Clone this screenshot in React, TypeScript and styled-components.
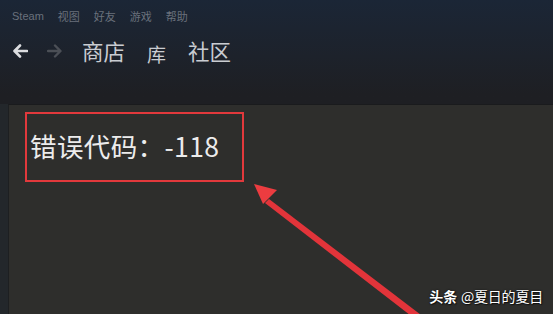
import React from "react";
import styled, { createGlobalStyle } from "styled-components";

const Global = createGlobalStyle`
  html, body { margin: 0; padding: 0; width: 553px; height: 314px; overflow: hidden; background: #1e2025; }
  #root { width: 553px; height: 314px; }
`;

const Page = styled.div`
  width: 553px;
  height: 314px;
  display: flex;
  flex-direction: column;
  background: linear-gradient(180deg, #1b2636 0%, #1d222b 18%, #1e1f23 30%, #1f2024 100%);
  font-family: "Noto Sans CJK SC", "Noto Sans", sans-serif;
  overflow: hidden;
  position: relative;
`;

const MenuBar = styled.div`
  height: 30px;
  display: flex;
  align-items: center;
  gap: 14px;
  padding-left: 12px;
  color: #6a717c;
`;

const MenuItem = styled.span<{ $latin?: boolean }>`
  font-family: ${(p) => (p.$latin ? '"Liberation Sans", Arial, sans-serif' : '"Noto Sans CJK SC", sans-serif')};
  font-size: 11px;
  margin-top: 2px;
`;

const NavBar = styled.div`
  height: 74px;
  display: flex;
  align-items: flex-start;
  padding-top: 6px;
  padding-left: 11px;
  box-sizing: border-box;
`;

const ArrowBtn = styled.span<{ $active?: boolean }>`
  width: 17px;
  height: 30px;
  display: flex;
  align-items: center;
  justify-content: center;
  margin-right: ${(p) => (p.$active ? "18px" : "19px")};
  color: ${(p) => (p.$active ? "#dcdde0" : "#4b4f56")};
`;

const NavLink = styled.span<{ $gap: number; $small?: boolean }>`
  font-size: ${(p) => (p.$small ? "19px" : "21.5px")};
  line-height: 30px;
  color: #c9ccd1;
  margin-right: ${(p) => p.$gap}px;
  margin-top: ${(p) => (p.$small ? 3 : 0)}px;
`;

const Content = styled.div`
  flex: 1;
  display: flex;
  padding-left: 8px;
  background: #23272b;
`;

const Panel = styled.div`
  flex: 1;
  position: relative;
  background: #2e2e2c;
  border-top: 1px solid #1a1b1d;
  border-left: 1px solid #1d1f21;
  padding: 7px 0 0 16px;
`;

const ErrorBox = styled.div`
  width: 212px;
  height: 66px;
  border: 2px solid #e2393c;
  display: flex;
  align-items: center;
  padding-left: 3px;
  box-sizing: content-box;
`;

const ErrorText = styled.span`
  font-size: 26.5px;
  font-weight: 400;
  color: #ececec;
  letter-spacing: 0.4px;
  margin-top: -3px;
`;

const Overlay = styled.svg`
  position: absolute;
  left: -8px;
  top: -105px;
  width: 553px;
  height: 314px;
  pointer-events: none;
`;

const Watermark = styled.div`
  position: absolute;
  right: 10px;
  bottom: 8px;
  font-size: 14px;
  color: #ffffff;
  text-shadow: 0 0 2px rgba(0, 0, 0, 0.8), 1px 1px 1px rgba(0, 0, 0, 0.6);
  white-space: nowrap;
  letter-spacing: -0.2px;
`;

const Bold = styled.b`
  font-weight: 700;
  margin-right: 4px;
`;

const LeftArrow = () => (
  <svg width="16" height="14" viewBox="0 0 16 14">
    <path d="M15 7H3M8 1.5L2.5 7 8 12.5" fill="none" stroke="currentColor" strokeWidth="2.6" strokeLinecap="round" strokeLinejoin="round" />
  </svg>
);

const RightArrow = () => (
  <svg width="16" height="14" viewBox="0 0 16 14">
    <path d="M1 7h12M8 1.5L13.5 7 8 12.5" fill="none" stroke="currentColor" strokeWidth="2.4" strokeLinecap="round" strokeLinejoin="round" />
  </svg>
);

export default function App() {
  return (
    <>
      <Global />
      <Page>
        <MenuBar>
          <MenuItem $latin>Steam</MenuItem>
          <MenuItem>视图</MenuItem>
          <MenuItem>好友</MenuItem>
          <MenuItem>游戏</MenuItem>
          <MenuItem>帮助</MenuItem>
        </MenuBar>
        <NavBar>
          <ArrowBtn $active>
            <LeftArrow />
          </ArrowBtn>
          <ArrowBtn>
            <RightArrow />
          </ArrowBtn>
          <NavLink $gap={22}>商店</NavLink>
          <NavLink $gap={22} $small>库</NavLink>
          <NavLink $gap={0}>社区</NavLink>
        </NavBar>
        <Content>
          <Panel>
            <ErrorBox>
              <ErrorText>错误代码：-118</ErrorText>
            </ErrorBox>
            <Overlay viewBox="0 0 553 314">
              <path d="M268 199 L424 318 L418 322 L264 203 Z" fill="#e2343a" />
              <path d="M253 184 L276 190 L262 204 Z" fill="#ec3c40" />
            </Overlay>
            <Watermark>
              <Bold>头条</Bold>@夏日的夏目
            </Watermark>
          </Panel>
        </Content>
      </Page>
    </>
  );
}
